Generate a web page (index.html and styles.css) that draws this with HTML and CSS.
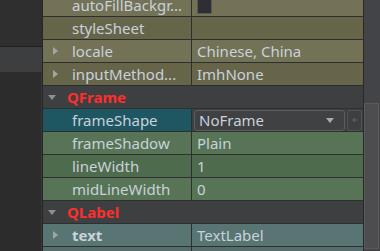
FILE: index.html
```html
<!DOCTYPE html>
<html lang="en">
<head>
  <meta charset="UTF-8">
  <title>Property Editor</title>
  <link rel="stylesheet" href="styles.css">
</head>
<body>
  <div class="editor">
    <div class="side">
      <div class="side-top"></div>
      <div class="side-band"></div>
      <div class="side-bottom"></div>
    </div>

    <div class="tree">
      <div class="row olive-light">
        <div class="name"><span class="label">autoFillBackgr...</span></div>
        <div class="value"><span class="check"></span></div>
      </div>
      <div class="row olive-dark">
        <div class="name"><span class="label">styleSheet</span></div>
        <div class="value"></div>
      </div>
      <div class="row olive-light">
        <div class="name"><span class="arrow"></span><span class="label">locale</span></div>
        <div class="value">Chinese, China</div>
      </div>
      <div class="row olive-dark">
        <div class="name"><span class="arrow"></span><span class="label">inputMethod...</span></div>
        <div class="value">ImhNone</div>
      </div>

      <div class="row header">
        <div class="group"><span class="arrow-down"></span>QFrame</div>
      </div>
      <div class="row green-light">
        <div class="name selected"><span class="label">frameShape</span></div>
        <div class="value editing">
          <div class="combo">
            <span>NoFrame</span>
            <span class="combo-arrow"></span>
          </div>
          <div class="reset">
            <svg width="8" height="8" viewBox="0 0 8 8"><path d="M7 4H2M4 2L2 4l2 2" fill="none" stroke="#5a5c5e" stroke-width="1.2"/></svg>
          </div>
        </div>
      </div>
      <div class="row green-light">
        <div class="name"><span class="label">frameShadow</span></div>
        <div class="value">Plain</div>
      </div>
      <div class="row green-dark">
        <div class="name"><span class="label">lineWidth</span></div>
        <div class="value">1</div>
      </div>
      <div class="row green-light">
        <div class="name"><span class="label">midLineWidth</span></div>
        <div class="value">0</div>
      </div>

      <div class="row header">
        <div class="group"><span class="arrow-down"></span>QLabel</div>
      </div>
      <div class="row teal">
        <div class="name"><span class="arrow"></span><span class="label bold">text</span></div>
        <div class="value">TextLabel</div>
      </div>
      <div class="row teal-dark">
        <div class="name"></div>
        <div class="value"></div>
      </div>
    </div>

    <div class="scrollbar">
      <div class="handle"></div>
    </div>
  </div>
</body>
</html>
```

FILE: styles.css
```css
body {
  margin: 0;
  background-color: #2b2b2b;
  font-family: "Noto Sans", "Open Sans", sans-serif;
  font-size: 15px;
  color: #c9d1da;
  overflow: hidden;
}
.editor {
  display: flex;
  height: 251px;
  overflow: hidden;
}
.side {
  width: 42px;
  border-right: 1px solid #262626;
  display: flex;
  flex-direction: column;
}
.side-top {
  height: 46px;
  background-color: #2f2f30;
  border-bottom: 1px solid #1f1f1f;
}
.side-band {
  height: 25px;
  background-color: #3c3e40;
  border-bottom: 1px solid #2a2a2a;
}
.side-bottom {
  flex: 1;
  background-color: #2c2c2c;
  border-right: 1px solid #383838;
}
.tree {
  flex: 1;
  margin-top: -6px;
}
.row {
  display: grid;
  grid-template-columns: 149px 1fr;
  height: 22px;
  border-bottom: 1px solid #2e2f2f;
  line-height: 22px;
}
.name {
  position: relative;
  padding-left: 29px;
  border-right: 1px solid #2e2f2f;
  white-space: nowrap;
  overflow: hidden;
}
.value {
  padding-left: 5px;
  white-space: nowrap;
  overflow: hidden;
}
.arrow {
  position: absolute;
  left: 10px;
  top: 7px;
  border-left: 5px solid #a3a6a0;
  border-top: 4px solid transparent;
  border-bottom: 4px solid transparent;
}
.bold {
  font-weight: bold;
}
.olive-light { background-color: #737256; }
.olive-dark { background-color: #66654a; }
.green-light { background-color: #577556; }
.green-dark { background-color: #4f6b4e; }
.teal { background-color: #587573; }
.teal-dark { background-color: #536e6c; }
.header {
  background-color: #3e3f41;
  grid-template-columns: 1fr;
}
.group {
  position: relative;
  padding-left: 24px;
  color: #ff2e2e;
  font-weight: bold;
}
.arrow-down {
  position: absolute;
  left: 5px;
  top: 9px;
  border-top: 5px solid #8e8f91;
  border-left: 4px solid transparent;
  border-right: 4px solid transparent;
}
.selected {
  background-color: #1e5662;
}
.editing {
  background-color: #3e3f41;
  display: flex;
  align-items: center;
  gap: 2px;
  padding-left: 2px;
}
.combo {
  width: 145px;
  height: 19px;
  border: 1px solid #5c5e60;
  border-radius: 3px;
  background-color: #3f4143;
  display: flex;
  align-items: center;
  justify-content: space-between;
  padding-left: 4px;
  line-height: 19px;
}
.combo-arrow {
  margin-right: 10px;
  border-top: 5px solid #a9abad;
  border-left: 4px solid transparent;
  border-right: 4px solid transparent;
}
.reset {
  width: 13px;
  height: 19px;
  border: 1px solid #505254;
  border-radius: 3px;
  display: flex;
  align-items: center;
  justify-content: center;
}
.check {
  display: inline-block;
  width: 13px;
  height: 13px;
  margin-top: 5px;
  vertical-align: top;
  background-color: #2e2f33;
  border: 1px solid #56585a;
}
.scrollbar {
  width: 16px;
  border-left: 1px solid #2a2a2a;
  background-color: #434447;
  display: flex;
  flex-direction: column;
  padding-top: 103px;
  padding-bottom: 2px;
}
.handle {
  flex: 1;
  background-color: #4d4d4f;
  border: 1px solid #5a5a5b;
  margin-right: 1px;
}
```
